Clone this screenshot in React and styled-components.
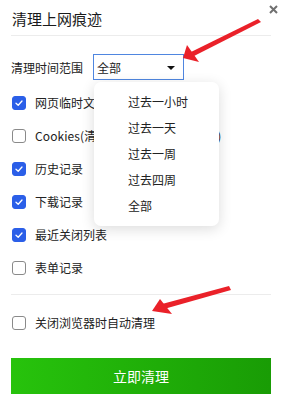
import React, { useState } from "react";
import styled, { createGlobalStyle } from "styled-components";

const GlobalStyle = createGlobalStyle`
  html, body {
    margin: 0;
    padding: 0;
    background: #fff;
  }
  body {
    font-family: "Noto Sans CJK SC", "Noto Sans", sans-serif;
    color: #222;
  }
`;

const items = [
  { label: "网页临时文件", checked: true },
  { label: "Cookies(清除后网站需要重新登录)", checked: false, wide: true },
  { label: "历史记录", checked: true },
  { label: "下载记录", checked: true },
  { label: "最近关闭列表", checked: true },
  { label: "表单记录", checked: false },
];

const ranges = ["过去一小时", "过去一天", "过去一周", "过去四周", "全部"];

const App = () => {
  const [checks, setChecks] = useState(items.map((i) => i.checked));
  const [autoClear, setAutoClear] = useState(false);

  const toggle = (idx) => {
    setChecks(checks.map((c, i) => (i === idx ? !c : c)));
  };

  return (
    <Panel>
      <GlobalStyle />
      <Header>
        <Title>清理上网痕迹</Title>
      </Header>
      <CloseBtn aria-label="close">
        <svg width="9" height="9" viewBox="0 0 9 9">
          <path d="M1 1 L8 8 M8 1 L1 8" stroke="#707070" strokeWidth="2" />
        </svg>
      </CloseBtn>

      <RangeRow>
        <RangeLabel>清理时间范围</RangeLabel>
        <Select>
          <span>全部</span>
          <Caret />
        </Select>
      </RangeRow>

      <List>
        {items.map((item, idx) => (
          <Row key={item.label} onClick={() => toggle(idx)}>
            <Box checked={checks[idx]}>
              {checks[idx] && <Tick />}
            </Box>
            <RowText wide={item.wide}>{item.label}</RowText>
          </Row>
        ))}
      </List>

      <Divider />

      <AutoRow onClick={() => setAutoClear(!autoClear)}>
        <Box checked={autoClear}>{autoClear && <Tick />}</Box>
        <RowText>关闭浏览器时自动清理</RowText>
      </AutoRow>

      <ClearBtn>立即清理</ClearBtn>

      {/* 시간 범위 드롭다운 메뉴 */}
      <Menu>
        {ranges.map((r) => (
          <MenuItem key={r}>{r}</MenuItem>
        ))}
      </Menu>

      {/* 빨간 화살표 표시 */}
      <Arrows width="285" height="407" viewBox="0 0 285 407">
        <path d="M258 19 L261 22 L194 56 L191 52 Z" fill="#ea2129" />
        <path d="M183 58 L187 45 L199 62 Z" fill="#ea2129" />
        <path d="M229 286 L231 290 L164 309 L162 304 Z" fill="#ea2129" />
        <path d="M152 311 L160 299 L172 314 Z" fill="#ea2129" />
      </Arrows>
    </Panel>
  );
};

const Tick = () => (
  <svg width="10" height="10" viewBox="0 0 10 10">
    <path
      d="M2 5.2 L4.2 7.2 L8 3"
      fill="none"
      stroke="#fff"
      strokeWidth="1.3"
      strokeLinecap="round"
      strokeLinejoin="round"
    />
  </svg>
);

const Panel = styled.div`
  position: relative;
  width: 285px;
  height: 407px;
  box-sizing: border-box;
  padding: 0 14px 0 11px;
  display: flex;
  flex-direction: column;
`;

const Header = styled.div`
  height: 35px;
  display: flex;
  align-items: center;
  border-bottom: 1px solid #ececec;
  padding-left: 1px;
`;

const Title = styled.div`
  font-size: 15px;
  color: #1a1a1a;
  margin-top: 2px;
`;

const CloseBtn = styled.button`
  position: absolute;
  top: 4px;
  right: 6px;
  width: 11px;
  height: 11px;
  padding: 0;
  border: none;
  background: none;
  display: flex;
  align-items: center;
  justify-content: center;
`;

const RangeRow = styled.div`
  margin-top: 18px;
  display: flex;
  align-items: center;
  gap: 10px;
`;

const RangeLabel = styled.span`
  font-size: 12px;
`;

const Select = styled.div`
  width: 91px;
  height: 26px;
  box-sizing: border-box;
  border: 1px solid #4f86e0;
  display: flex;
  align-items: center;
  justify-content: space-between;
  padding: 0 8px 0 3px;
  font-size: 12px;
`;

const Caret = styled.span`
  width: 0;
  height: 0;
  border-left: 4px solid transparent;
  border-right: 4px solid transparent;
  border-top: 4px solid #111;
  margin-top: 1px;
`;

const List = styled.div`
  margin-top: 6px;
  display: flex;
  flex-direction: column;
`;

const Row = styled.div`
  height: 33px;
  display: flex;
  align-items: center;
  gap: 9px;
  padding-left: 1px;
  cursor: pointer;
`;

const AutoRow = styled(Row)`
  margin-top: 11px;
`;

const Box = styled.span`
  width: 14px;
  height: 14px;
  box-sizing: border-box;
  border-radius: 3px;
  flex-shrink: 0;
  display: flex;
  align-items: center;
  justify-content: center;
  background: ${(p) => (p.checked ? "#2b5fe8" : "#fff")};
  border: 1px solid ${(p) => (p.checked ? "#2b5fe8" : "#8a8a8a")};
`;

const RowText = styled.span`
  font-size: 12px;
  white-space: nowrap;
  letter-spacing: ${(p) => (p.wide ? "0.1px" : "0")};
`;

const Divider = styled.div`
  margin-top: 10px;
  height: 1px;
  background: #ececec;
`;

const ClearBtn = styled.button`
  margin-top: 19px;
  height: 36px;
  border: none;
  color: #fff;
  font-family: inherit;
  font-size: 14px;
  background: linear-gradient(90deg, #27c30c, #199c05);
`;

const Menu = styled.div`
  position: absolute;
  left: 94px;
  top: 82px;
  width: 125px;
  height: 144px;
  box-sizing: border-box;
  padding-top: 7px;
  background: #fff;
  border-radius: 7px;
  box-shadow: 0 3px 14px rgba(0, 0, 0, 0.14);
  display: flex;
  flex-direction: column;
`;

const MenuItem = styled.div`
  height: 26px;
  line-height: 26px;
  padding-left: 34px;
  font-size: 12px;
`;

const Arrows = styled.svg`
  position: absolute;
  left: 0;
  top: 0;
  pointer-events: none;
`;

export default App;
